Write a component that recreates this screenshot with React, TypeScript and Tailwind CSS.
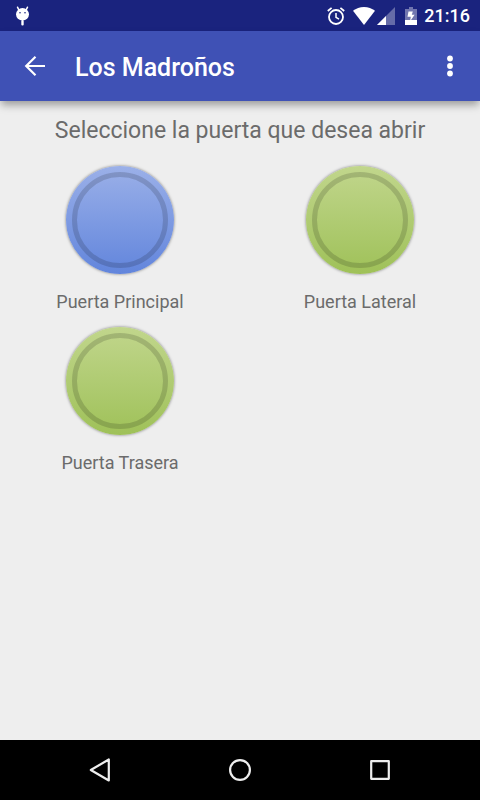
import { clsx } from "clsx"

interface Door {
  name: string
  color: "blue" | "green"
}

const doors: Door[] = [
  { name: "Puerta Principal", color: "blue" },
  { name: "Puerta Lateral", color: "green" },
  { name: "Puerta Trasera", color: "green" },
]

const StatusBar = () => (
  <div className="flex h-[31px] items-center bg-[#1a237e] pl-[14px] pr-[10px] text-white">
    <svg width="17" height="20" viewBox="0 0 17 20" fill="currentColor" aria-hidden="true">
      <path d="M3.5 1.2 4.8 3.8M13.5 1.2 12.2 3.8" stroke="currentColor" strokeWidth="1.5" strokeLinecap="round" />
      <ellipse cx="8.5" cy="8.3" rx="6.5" ry="6.2" />
      <rect x="7.3" y="14" width="2.4" height="5.6" rx="1" />
      <circle cx="6" cy="6.8" r="0.8" fill="#1a237e" />
      <circle cx="11" cy="6.8" r="0.8" fill="#1a237e" />
    </svg>
    <div className="ml-auto flex items-center">
      <svg width="18" height="18" viewBox="0 0 18 18" fill="none" stroke="currentColor" aria-hidden="true">
        <circle cx="9" cy="10" r="7" strokeWidth="1.8" />
        <path d="M9 6v4.3l3 1.9" strokeWidth="1.5" />
        <path d="M.8 4 4.6.9M17.2 4 13.4.9" strokeWidth="1.8" />
      </svg>
      <svg className="ml-2" width="22" height="18" viewBox="0 0 22 18" fill="currentColor" aria-hidden="true">
        <path d="M11 18 0 3.8C3.2 1.3 6.8 0 11 0s7.8 1.3 11 3.8z" />
      </svg>
      <svg className="ml-0.5" width="18" height="18" viewBox="0 0 18 18" fill="currentColor" aria-hidden="true">
        <path d="M0 18 18 0v18z" opacity=".33" />
        <path d="M0 18 9 9v9z" />
      </svg>
      <svg className="ml-[10px]" width="12" height="18" viewBox="0 0 12 18" fill="currentColor" aria-hidden="true">
        <path d="M0 2h4V0h4v2h4v11H0z" opacity=".38" />
        <path d="M0 13h12v5H0z" />
        <path d="M3.5 4.5h4.3L6.800 7.800h2.800L5 14.500l.8-4.700H2.500z" />
      </svg>
      <span className="ml-[7px] text-lg leading-6 font-medium">21:16</span>
    </div>
  </div>
)

const AppBar = () => (
  <header className="relative flex h-[70px] items-center bg-[#3f51b5] px-[23px] text-white shadow-[0_5px_8px_-1px_rgba(0,0,0,0.35)]">
    <button type="button" aria-label="Volver">
      <svg width="24" height="24" viewBox="0 0 24 24" fill="none" stroke="currentColor" strokeWidth="2.2" aria-hidden="true">
        <path d="M22 12H4M12.5 2.7 3.2 12l9.3 9.3" />
      </svg>
    </button>
    <h1 className="ml-7 pt-1 text-[25px] leading-8 font-medium">Los Madroños</h1>
    <button type="button" aria-label="Más opciones" className="ml-auto">
      <svg width="14" height="24" viewBox="0 0 14 24" fill="currentColor" aria-hidden="true">
        <circle cx="7" cy="4.5" r="2.9" />
        <circle cx="7" cy="12" r="2.9" />
        <circle cx="7" cy="19.5" r="2.9" />
      </svg>
    </button>
  </header>
)

const DoorButton = ({ name, color }: Door) => (
  <button type="button" className="flex flex-col items-center">
    <span
      className={clsx(
        "size-[108px] rounded-full bg-linear-to-b p-[6px] shadow-[0_0_3px_rgba(0,0,0,0.5)]",
        color === "blue" ? "from-[#9bb0e8] to-[#6285dc]" : "from-[#c1d68c] to-[#9fc158]",
      )}
    >
      <span className="block size-full rounded-full border-5 border-black/15" />
    </span>
    <span className="mt-4 text-lg leading-6">{name}</span>
  </button>
)

const NavBar = () => (
  <nav className="flex h-[60px] items-center justify-center gap-[116px] bg-black text-[#eeeeee]">
    <button type="button" aria-label="Atrás">
      <svg width="24" height="24" viewBox="0 0 24 24" fill="none" stroke="currentColor" strokeWidth="2.2" strokeLinejoin="round" aria-hidden="true">
        <path d="M20.8 1.5v21L2.8 12z" />
      </svg>
    </button>
    <button type="button" aria-label="Inicio">
      <svg width="24" height="24" viewBox="0 0 24 24" fill="none" stroke="currentColor" strokeWidth="2.2" aria-hidden="true">
        <circle cx="12" cy="12" r="9.9" />
      </svg>
    </button>
    <button type="button" aria-label="Recientes">
      <svg width="24" height="24" viewBox="0 0 24 24" fill="none" stroke="currentColor" strokeWidth="2.2" strokeLinejoin="round" aria-hidden="true">
        <path d="M3.2 3.2h17.6v17.6H3.2z" />
      </svg>
    </button>
  </nav>
)

export default function App() {
  return (
    <div className="flex min-h-screen flex-col bg-[#eeeeee] font-['Roboto',sans-serif] text-[#6b6b6b]">
      <StatusBar />
      <AppBar />
      <main className="flex-1 pt-[14px]">
        <h2 className="text-center text-[23px] leading-8">Seleccione la puerta que desea abrir</h2>
        <div className="mt-[19px] grid grid-cols-2 gap-y-[13px]">
          {doors.map((door) => (
            <DoorButton key={door.name} {...door} />
          ))}
        </div>
      </main>
      <NavBar />
    </div>
  )
}
